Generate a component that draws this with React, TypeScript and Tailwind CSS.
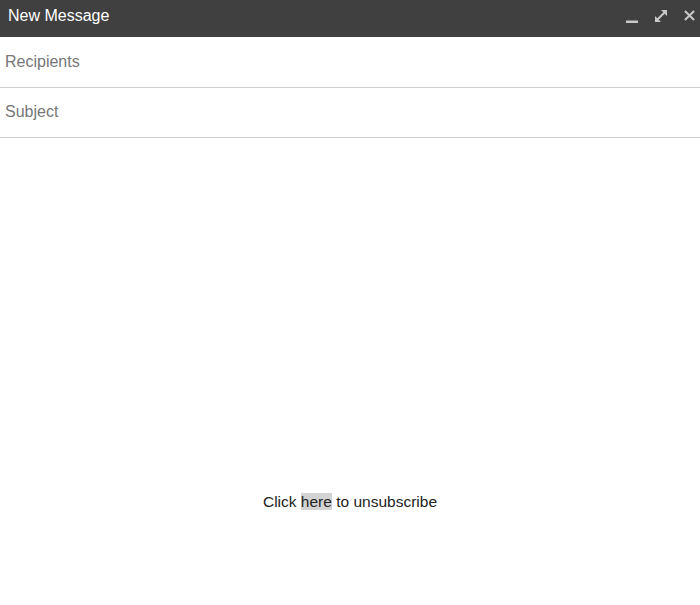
export default function App() {
  return (
    <div className="w-[700px] h-[605px] bg-white font-['Liberation_Sans',Arial,sans-serif]">
      <div className="flex h-[37px] items-center justify-between bg-[#404040] pb-[6px] pl-2 pr-[5px]">
        <span className="text-[16px] text-white">New Message</span>
        <div className="flex items-center gap-[16px] text-[#c8c8c8]">
          <svg width="12" height="14" viewBox="0 0 12 14">
            <rect x="0" y="11.5" width="12" height="2.5" fill="currentColor" />
          </svg>
          <svg width="14" height="14" viewBox="0 0 14 14" fill="none">
            <path d="M3 11 L11 3" stroke="currentColor" strokeWidth="2" />
            <path d="M7 1 H13 V7 Z" fill="currentColor" />
            <path d="M1 7 V13 H7 Z" fill="currentColor" />
          </svg>
          <svg width="11" height="11" viewBox="0 0 12 12">
            <path d="M1 1 L11 11 M11 1 L1 11" stroke="currentColor" strokeWidth="2.2" />
          </svg>
        </div>
      </div>
      <div className="flex h-[51px] items-center border-b border-[#d0d0d0] pl-[5px] text-[16px] text-[#777777]">
        Recipients
      </div>
      <div className="flex h-[50px] items-center border-b border-[#d0d0d0] pl-[5px] pb-[2px] text-[16px] text-[#777777]">
        Subject
      </div>
      <div className="flex justify-center pt-[352px] text-[15.5px] text-[#222222]">
        <p>
          Click <span className="bg-[#d3d3d3]">here</span> to unsubscribe
        </p>
      </div>
    </div>
  )
}
